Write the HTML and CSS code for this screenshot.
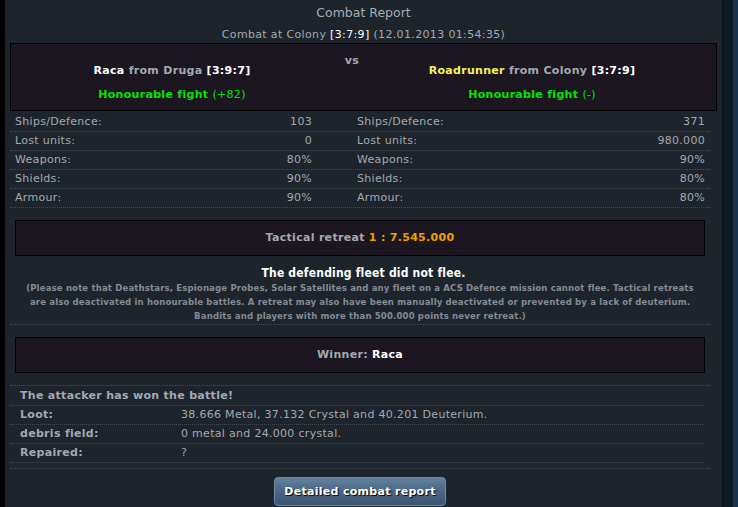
FILE: index.html
```html
<!DOCTYPE html>
<html lang="en">
<head>
<meta charset="utf-8">
<title>Combat Report</title>
<link rel="stylesheet" href="styles.css">
</head>
<body>
<div class="frame">
  <div class="edge-left"></div>
  <main class="panel">
    <h1 class="title">Combat Report</h1>
    <p class="subtitle">Combat at Colony <span class="coord">[3:7:9]</span> (12.01.2013 01:54:35)</p>

    <section class="versus">
      <div class="side">
        <div class="player"><span class="name-attacker">Raca</span> from Druga <span class="coord">[3:9:7]</span></div>
        <div class="honour">Honourable fight <span class="honour-pts">(+82)</span></div>
      </div>
      <div class="vs">vs</div>
      <div class="side">
        <div class="player"><span class="name-defender">Roadrunner</span> from Colony <span class="coord">[3:7:9]</span></div>
        <div class="honour">Honourable fight <span class="honour-pts">(-)</span></div>
      </div>
    </section>

    <div class="stats">
      <div class="stat-row"><span class="lbl">Ships/Defence:</span><span class="val">103</span><span class="lbl lbl-r">Ships/Defence:</span><span class="val val-r">371</span></div>
      <div class="stat-row"><span class="lbl">Lost units:</span><span class="val">0</span><span class="lbl lbl-r">Lost units:</span><span class="val val-r">980.000</span></div>
      <div class="stat-row"><span class="lbl">Weapons:</span><span class="val">80%</span><span class="lbl lbl-r">Weapons:</span><span class="val val-r">90%</span></div>
      <div class="stat-row"><span class="lbl">Shields:</span><span class="val">90%</span><span class="lbl lbl-r">Shields:</span><span class="val val-r">80%</span></div>
      <div class="stat-row"><span class="lbl">Armour:</span><span class="val">90%</span><span class="lbl lbl-r">Armour:</span><span class="val val-r">80%</span></div>
    </div>

    <div class="box tactical">Tactical retreat <span class="ratio">1 : 7.545.000</span></div>

    <p class="flee-title">The defending fleet did not flee.</p>
    <p class="notes">(Please note that Deathstars, Espionage Probes, Solar Satellites and any fleet on a ACS Defence mission cannot flee. Tactical retreats<br>are also deactivated in honourable battles. A retreat may also have been manually deactivated or prevented by a lack of deuterium.<br>Bandits and players with more than 500.000 points never retreat.)</p>

    <div class="box winner">Winner: <span class="winner-name">Raca</span></div>

    <div class="sep"></div>

    <div class="results">
      <div class="res-row res-head">The attacker has won the battle!</div>
      <div class="res-row"><span class="res-lbl">Loot:</span><span class="res-val">38.666 Metal, 37.132 Crystal and 40.201 Deuterium.</span></div>
      <div class="res-row"><span class="res-lbl">debris field:</span><span class="res-val">0 metal and 24.000 crystal.</span></div>
      <div class="res-row"><span class="res-lbl">Repaired:</span><span class="res-val">?</span></div>
    </div>

    <div class="sep2"></div>

    <div class="actions">
      <button class="btn" type="button">Detailed combat report</button>
    </div>
  </main>
  <div class="edge-right"></div>
</div>
</body>
</html>
```

FILE: styles.css
```css
* {
  box-sizing: border-box;
  margin: 0;
  padding: 0;
}

html, body {
  height: 100%;
}

body {
  background: #000;
  font-family: "DejaVu Sans", Verdana, sans-serif;
  font-size: 11px;
  letter-spacing: 0.3px;
  color: #a3a9b0;
  overflow: hidden;
}

.frame {
  display: flex;
  height: 507px;
}

.edge-left {
  width: 5px;
  background: #000;
}

.panel {
  width: 718px;
  background: #1e242c;
  border-right: 1px solid #0a1016;
  display: flex;
  flex-direction: column;
}

.edge-right {
  flex: 1;
  background: linear-gradient(to right, #0c1a26 0, #0c1a26 10px, #17324d 10px);
}

.title {
  font-size: 12.5px;
  font-weight: normal;
  letter-spacing: 0;
  line-height: 18px;
  padding-top: 4px;
  text-align: center;
  color: #a6abb1;
}

.subtitle {
  margin-top: 6px;
  line-height: 14px;
  text-align: center;
  letter-spacing: 0.35px;
}

.coord {
  color: #fff;
}

.versus {
  margin: 1px 5px 0;
  border: 1px solid #000;
  background: #1b1620;
  padding: 10px 0 8px;
  display: grid;
  grid-template-columns: 322px 38px 322px;
  font-weight: bold;
}

.player {
  margin-top: 10px;
  line-height: 14px;
  text-align: center;
}

.honour {
  margin-top: 10px;
  line-height: 14px;
  text-align: center;
  color: #00e400;
}

.honour-pts {
  font-weight: normal;
}

.name-attacker {
  color: #fff;
}

.name-defender {
  color: #f6f35c;
}

.vs {
  line-height: 14px;
  text-align: center;
}

.stats {
  margin: 2px 12px 0 5px;
}

.stat-row {
  display: grid;
  grid-template-columns: 190px 115px 1fr auto;
  line-height: 18px;
  border-bottom: 1px dotted #454b53;
}

.lbl {
  padding-left: 5px;
}

.lbl-r {
  padding-left: 42px;
}

.val {
  text-align: right;
  padding-right: 3px;
}

.val-r {
  padding-right: 5px;
}

.box {
  border: 1px solid #000;
  background: #1b1620;
  padding: 10px 0;
  line-height: 14px;
  text-align: center;
  font-weight: bold;
  margin: 12px 17px 0 10px;
}

.ratio {
  color: #e8a200;
}

.winner-name {
  color: #fff;
}

.flee-title {
  margin-top: 10px;
  line-height: 15px;
  font-size: 12px;
  font-weight: bold;
  color: #fff;
  text-align: center;
  font-family: "DejaVu Sans Condensed", "DejaVu Sans", sans-serif;
  letter-spacing: 0.2px;
}

.notes {
  margin: 0 12px 0 5px;
  padding-bottom: 1px;
  border-bottom: 1px dotted #454b53;
  line-height: 14px;
  font-family: "DejaVu Sans Condensed", "DejaVu Sans", sans-serif;
  font-size: 9.5px;
  font-weight: bold;
  letter-spacing: 0.15px;
  color: #838b93;
  text-align: center;
}

.sep {
  margin: 12px 12px 0 5px;
  border-top: 1px dotted #454b53;
}

.results {
  margin: 0 19px 0 5px;
  padding-top: 1px;
}

.res-row {
  display: grid;
  grid-template-columns: 161px 1fr;
  padding-left: 10px;
  line-height: 18px;
  border-bottom: 1px dotted #454b53;
}

.res-head {
  display: block;
  font-weight: bold;
}

.res-lbl {
  font-weight: bold;
}

.sep2 {
  margin: 5px 12px 0 5px;
  border-top: 1px dotted #454b53;
}

.actions {
  margin: 8px 12px 0 5px;
  display: flex;
  justify-content: center;
}

.btn {
  width: 172px;
  height: 29px;
  border-radius: 4px;
  border: 1px solid #6e8aa6;
  background: linear-gradient(#6382a1, #4a6684 50%, #3a5572);
  color: #fff;
  font-family: "DejaVu Sans", Verdana, sans-serif;
  font-size: 11px;
  font-weight: bold;
  letter-spacing: 0.3px;
  text-shadow: 1px 1px 1px #000;
  cursor: pointer;
}
```
